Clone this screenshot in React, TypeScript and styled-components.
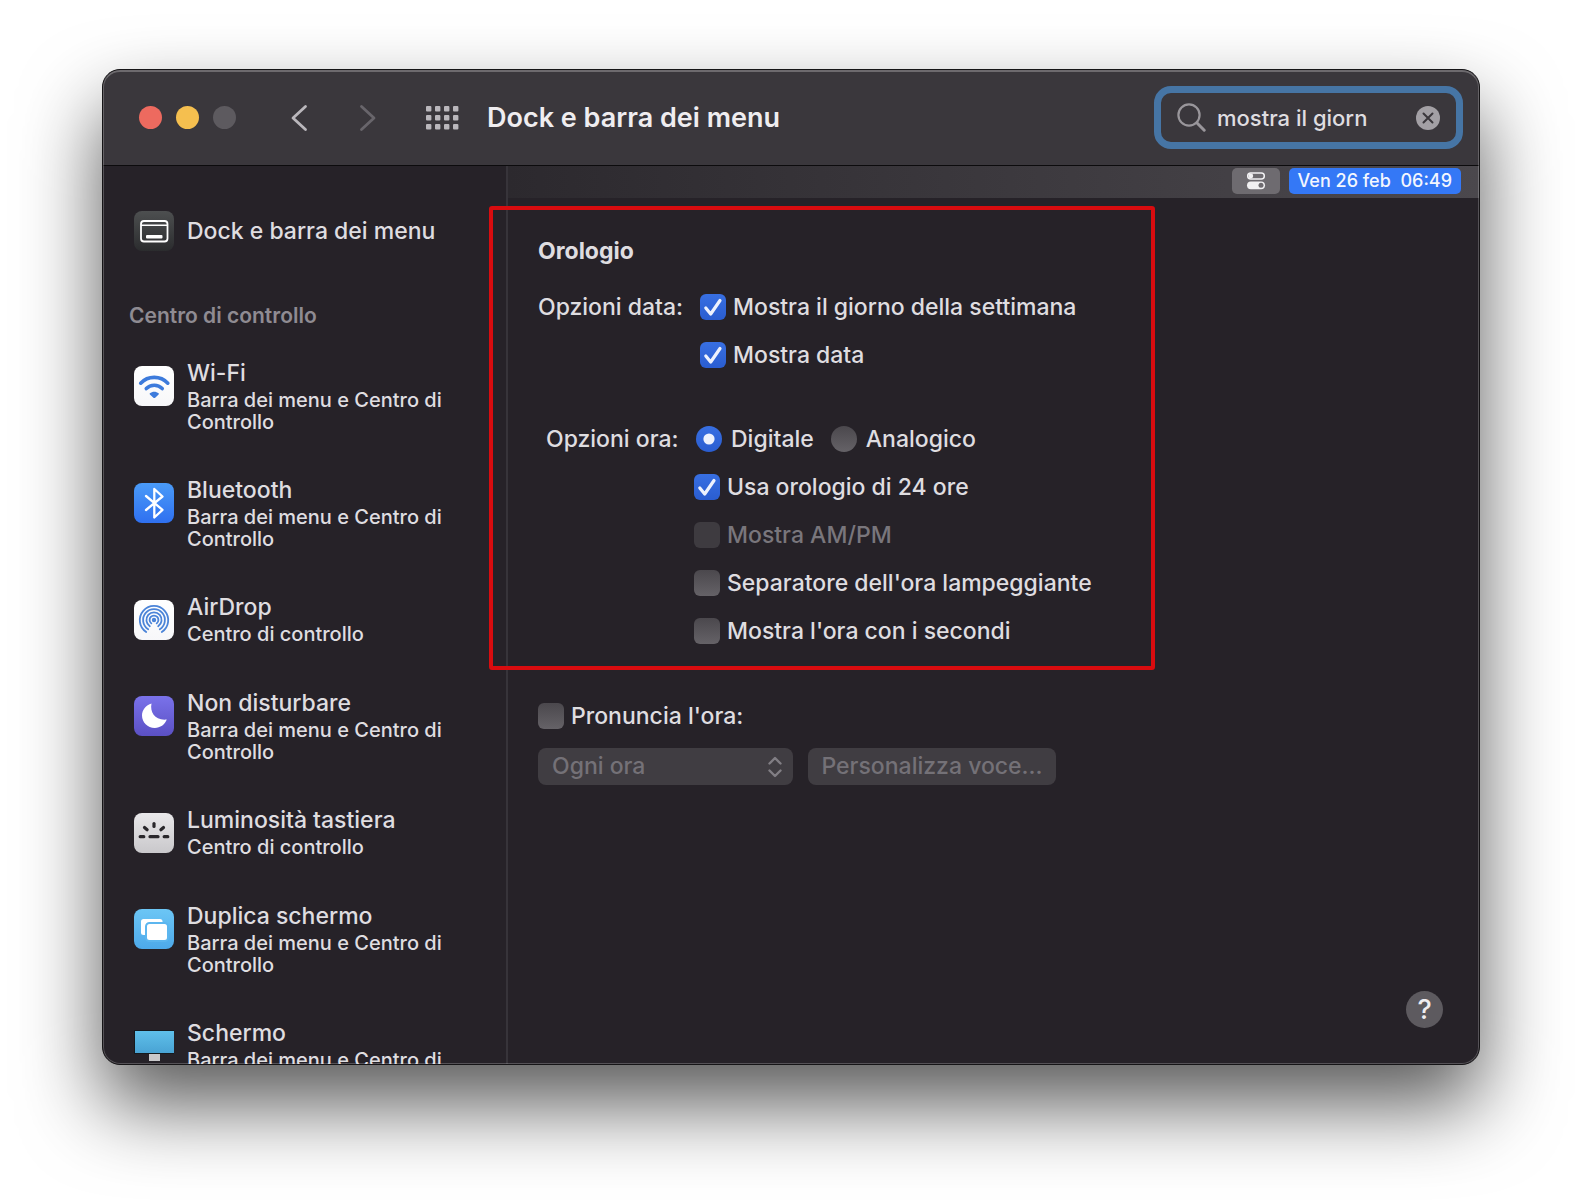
import React, { useId, useState } from "react";
import styled, { createGlobalStyle, css } from "styled-components";

const color = {
  text: "#dfdde0",
  strong: "#efedf0",
  muted: "#8f8b92",
  disabled: "#79767c",
  panel: "#262228",
  header: "#3a373c",
  line: "#37343a",
};

const GlobalStyle = createGlobalStyle`
  *, *::before, *::after { box-sizing: border-box; }
  body {
    margin: 0;
    background: #fff;
    color: ${color.text};
    font-family: Inter, "Liberation Sans", sans-serif;
    font-size: 23px;
    font-weight: 500;
    line-height: 28px;
  }
  button, input, select { font: inherit; color: inherit; }
`;

const Desktop = styled.div`
  padding: 69px 102px 135px;
  overflow: hidden;
`;

const Window = styled.main`
  position: relative;
  display: flex;
  flex-direction: column;
  height: calc(100vh - 204px);
  border: 1px solid #161517;
  border-radius: 18px;
  background: ${color.panel};
  box-shadow: 0 40px 80px rgba(0, 0, 0, 0.65);
  overflow: hidden;

  &::after {
    content: "";
    position: absolute;
    inset: 0;
    border: 1px solid rgba(255, 255, 255, 0.22);
    border-top: 2px solid rgba(255, 255, 255, 0.26);
    border-radius: 17px;
    pointer-events: none;
  }
`;

const Header = styled.header`
  flex: none;
  display: flex;
  align-items: center;
  height: 96px;
  padding: 0 16px 0 36px;
  border-bottom: 1px solid #0c0b0d;
  background: ${color.header};
`;

const Lights = styled.div`
  display: flex;
  gap: 14px;
`;

const Light = styled.button<{ $fill: string }>`
  width: 23px;
  height: 23px;
  padding: 0;
  border: 0;
  border-radius: 50%;
  background: ${(p) => p.$fill};
`;

const History = styled.div`
  display: flex;
  gap: 35px;
  margin: 0 40px 0 46px;
`;

const ToolButton = styled.button<{ $dim?: boolean }>`
  display: grid;
  place-items: center;
  width: 34px;
  height: 34px;
  padding: 0;
  border: 0;
  background: none;
  color: ${(p) => (p.$dim ? "#68656b" : "#bab7bc")};
`;

const Title = styled.h1`
  margin: 0 0 0 28px;
  color: ${color.strong};
  font-size: 27px;
  font-weight: 600;
  line-height: 32px;
`;

const SearchBox = styled.div`
  display: flex;
  align-items: center;
  gap: 11px;
  width: 309px;
  height: 63px;
  margin-left: auto;
  padding: 0 16px;
  border: 7px solid #4675a5;
  border-radius: 17px;
`;

const SearchInput = styled.input`
  flex: 1;
  min-width: 0;
  padding: 0;
  border: 0;
  outline: 0;
  background: none;
  color: ${color.text};
  font-size: 22px;
`;

const ClearButton = styled.button`
  display: grid;
  place-items: center;
  width: 24px;
  height: 24px;
  padding: 0;
  border: 0;
  border-radius: 50%;
  background: #a3a0a5;
`;

const Body = styled.div`
  flex: 1;
  display: flex;
  min-height: 0;
`;

const Sidebar = styled.nav`
  flex: none;
  width: 405px;
  padding: 45px 30px 0 31px;
  border-right: 2px solid ${color.line};
  overflow: hidden;
`;

const SideItem = styled.a<{ $center?: boolean }>`
  display: flex;
  align-items: ${(p) => (p.$center ? "center" : "flex-start")};
  gap: 13px;
  color: ${color.text};
  text-decoration: none;
  cursor: default;

  svg {
    flex: none;
    margin-top: ${(p) => (p.$center ? "0" : "8px")};
  }
`;

const SideHeading = styled.h2`
  margin: 51px -5px 28px;
  color: ${color.muted};
  font-size: 21px;
  font-weight: 600;
  line-height: 28px;
`;

const SideList = styled.ul`
  display: flex;
  flex-direction: column;
  gap: 42px;
  margin: 0;
  padding: 0;
  list-style: none;

  li {
    min-height: 54px;
  }
`;

const SideName = styled.span`
  display: block;
  line-height: 31px;
`;

const SideNote = styled.span`
  display: block;
  font-size: 20px;
  line-height: 22px;
`;

const Content = styled.section`
  flex: 1;
  display: flex;
  flex-direction: column;
  min-width: 0;
`;

const MenuBar = styled.div`
  flex: none;
  display: flex;
  align-items: center;
  justify-content: flex-end;
  gap: 9px;
  height: 32px;
  padding: 0 18px 2px 0;
  background: linear-gradient(90deg, #2c292e, #4b484d);
`;

const ControlCenter = styled.span`
  display: grid;
  place-items: center;
  width: 48px;
  height: 26px;
  border-radius: 5px;
  background: #6e6b70;
`;

const Clock = styled.time`
  padding: 0 9px;
  border-radius: 5px;
  background: #3478f6;
  color: #f3f6fe;
  font-size: 18px;
  line-height: 26px;
  white-space: pre;
`;

const Pane = styled.form`
  flex: 1;
  display: flex;
  flex-direction: column;
  align-items: flex-start;
  padding: 38px 36px 36px 30px;
`;

const ClockOptions = styled.section`
  position: relative;
  width: 600px;

  &::after {
    content: "";
    position: absolute;
    inset: -30px -17px -25px -49px;
    border: 4px solid #d80c0f;
    border-radius: 3px;
    pointer-events: none;
  }
`;

const PaneTitle = styled.h2`
  margin: 0 0 27px;
  color: ${color.text};
  font-size: 23px;
  font-weight: 700;
  line-height: 30px;
`;

const Group = styled.div<{ $inset?: boolean }>`
  display: flex;
  margin-bottom: 56px;
  padding-left: ${(p) => (p.$inset ? "8px" : "0")};

  &:last-child {
    margin-bottom: 0;
  }
`;

const GroupLabel = styled.span<{ $width: number }>`
  flex: none;
  width: ${(p) => p.$width}px;
`;

const Options = styled.div`
  display: flex;
  flex-direction: column;
  gap: 20px;
`;

const RadioRow = styled.div`
  display: flex;
  gap: 17px;
  padding-left: 2px;
`;

const Choice = styled.label<{ $disabled?: boolean; $gap?: number }>`
  display: flex;
  align-items: center;
  gap: ${(p) => p.$gap ?? 7}px;
  color: ${(p) => (p.$disabled ? color.disabled : color.text)};
`;

const Mark = styled.span`
  display: grid;

  > * {
    grid-area: 1 / 1;
  }

  svg {
    visibility: hidden;
    pointer-events: none;
  }

  input:checked + svg {
    visibility: visible;
  }
`;

const controlFace = css`
  appearance: none;
  width: 26px;
  height: 26px;
  margin: 0;
  background: linear-gradient(#4b484d, #656267);

  &:checked {
    background: linear-gradient(#386fe2, #2a5dd0);
  }

  &:disabled {
    background: #3e3b40;
  }
`;

const CheckInput = styled.input`
  ${controlFace}
  border-radius: 6px;
`;

const RadioInput = styled.input`
  ${controlFace}
  border-radius: 50%;
`;

const Speak = styled.section`
  margin-top: 57px;
`;

const SpeakRow = styled.div`
  display: flex;
  gap: 15px;
  margin-top: 18px;
`;

const SelectWrap = styled.span`
  display: grid;
  align-items: center;
  width: 255px;

  > * {
    grid-area: 1 / 1;
  }

  svg {
    justify-self: end;
    margin-right: 11px;
    pointer-events: none;
  }
`;

const mutedFace = css`
  height: 37px;
  border: 0;
  border-radius: 8px;
  background: #403d42;
  color: #747177;
  opacity: 1;
`;

const Select = styled.select`
  ${mutedFace}
  appearance: none;
  width: 100%;
  padding: 0 14px 2px;
`;

const PushButton = styled.button`
  ${mutedFace}
  width: 248px;
  padding: 0 0 2px;
  white-space: nowrap;
`;

const HelpButton = styled.button`
  width: 37px;
  height: 37px;
  margin-top: auto;
  align-self: flex-end;
  padding: 0;
  border: 0;
  border-radius: 50%;
  background: #5d5a5f;
  color: ${color.strong};
  font-size: 27px;
  line-height: 37px;
`;

const Tile = ({ from, to, children }: { from: string; to: string; children: React.ReactNode }) => {
  const id = useId();
  return (
    <svg width="40" height="40" viewBox="0 0 40 40" fill="none" aria-hidden="true">
      <defs>
        <linearGradient id={id} x1="0" y1="0" x2="0" y2="1">
          <stop stopColor={from} />
          <stop offset="1" stopColor={to} />
        </linearGradient>
      </defs>
      <rect width="40" height="40" rx="8" fill={`url(#${id})`} />
      {children}
    </svg>
  );
};

const DockIcon = () => (
  <Tile from="#4d4f50" to="#2b2c2e">
    <rect x="7" y="10" width="26.5" height="20.5" rx="3" stroke="#fff" strokeWidth="1.8" />
    <path d="M7 14.200h26.500" stroke="#fff" strokeWidth="1.5" />
    <rect x="12" y="24" width="16.5" height="3.6" rx="1" fill="#fff" />
  </Tile>
);

const WifiIcon = () => (
  <Tile from="#ffffff" to="#f7f7f9">
    <g stroke="#3d7bdc" strokeWidth="3.6" strokeLinecap="round">
      <path d="M6.700 17.200C14 9.400 26.500 9.400 33.800 17.200" />
      <path d="M12.300 22.600C16.600 18.200 23.900 18.200 28.200 22.600" />
    </g>
    <path d="M15.900 27.300c2.400-2.200 6.300-2.200 8.700 0q.6.600 0 1.100l-3.400 3.300q-.9.700-1.800 0L15.900 28.400q-.6-.5 0-1.100Z" fill="#3d7bdc" />
  </Tile>
);

const BluetoothIcon = () => (
  <Tile from="#4a9bf8" to="#2f70f0">
    <path d="M12 13l16.500 13.800L20.300 34.500V6l8.200 7.500L12 27" stroke="#fff" strokeWidth="2.3" strokeLinecap="round" strokeLinejoin="round" />
  </Tile>
);

const AirDropIcon = () => (
  <Tile from="#ffffff" to="#f7f7f9">
    <g stroke="#4b84d8" strokeWidth="1.8" strokeLinecap="round">
      <path d="M12.200 32A14.200 14.200 0 1 1 27.800 32" />
      <path d="M14.200 29.300A10.900 10.900 0 1 1 25.800 29.300" />
      <path d="M15.800 26.300A7.600 7.600 0 1 1 24.200 26.300" />
      <path d="M17.300 23.400A4.400 4.400 0 1 1 22.700 23.400" />
    </g>
    <circle cx="20" cy="20" r="2.2" fill="#4b84d8" />
  </Tile>
);

const MoonIcon = () => (
  <Tile from="#7a72ea" to="#5b50c4">
    <path d="M17.500 7.600C15.600 16.500 21.500 25 32.800 23.600C30.800 28.800 26.200 32 20.800 32C13.600 32 8 26.400 8 19.600C8 14 12 9.200 17.500 7.600Z" fill="#fff" />
  </Tile>
);

const KeyboardLightIcon = () => (
  <Tile from="#e9e8ea" to="#c9c8cb">
    <g stroke="#29272b" strokeWidth="3.2" strokeLinecap="round">
      <path d="M20 10.500v3" />
      <path d="M10.500 14.500l2.600 2.200" />
      <path d="M29.500 14.500l-2.600 2.200" />
      <path d="M6.200 23.700h3.600" />
      <path d="M16 23.700h8" />
      <path d="M30.200 23.700h3.600" />
    </g>
  </Tile>
);

const MirrorIcon = () => (
  <Tile from="#6cc6f5" to="#4da9ea">
    <rect x="7" y="10" width="21.5" height="16" rx="2.5" fill="#fff" />
    <rect x="12" y="14" width="22" height="18" rx="3.5" fill="#fff" stroke="#5cb6ef" strokeWidth="2" />
  </Tile>
);

const DisplayIcon = () => {
  const id = useId();
  return (
    <svg width="40" height="40" viewBox="0 0 40 40" aria-hidden="true">
      <defs>
        <linearGradient id={id} x1="0" y1="0" x2="0" y2="1">
          <stop stopColor="#5fc0ea" />
          <stop offset="1" stopColor="#49a3d4" />
        </linearGradient>
      </defs>
      <rect x="0" y="4" width="40" height="24" fill="#151a1e" />
      <rect x="1" y="5" width="39" height="22" fill={`url(#${id})`} />
      <rect x="15" y="28" width="11" height="7" fill="#c9c8ca" />
    </svg>
  );
};

const items = [
  { name: "Wi-Fi", note: "Barra dei menu e Centro di Controllo", Icon: WifiIcon },
  { name: "Bluetooth", note: "Barra dei menu e Centro di Controllo", Icon: BluetoothIcon },
  { name: "AirDrop", note: "Centro di controllo", Icon: AirDropIcon },
  { name: "Non disturbare", note: "Barra dei menu e Centro di Controllo", Icon: MoonIcon },
  { name: "Luminosità tastiera", note: "Centro di controllo", Icon: KeyboardLightIcon },
  { name: "Duplica schermo", note: "Barra dei menu e Centro di Controllo", Icon: MirrorIcon },
  { name: "Schermo", note: "Barra dei menu e Centro di Controllo", Icon: DisplayIcon },
];

type CheckProps = { label: string; checked?: boolean; disabled?: boolean };

const Check = ({ label, checked, disabled }: CheckProps) => (
  <Choice $disabled={disabled}>
    <Mark>
      <CheckInput type="checkbox" defaultChecked={checked} disabled={disabled} />
      <svg width="26" height="26" viewBox="0 0 26 26" fill="none" aria-hidden="true">
        <path d="M5.800 14l4.900 6L20 6.500" stroke="#eef2fd" strokeWidth="3.2" strokeLinecap="round" strokeLinejoin="round" />
      </svg>
    </Mark>
    {label}
  </Choice>
);

const Radio = ({ label, checked }: CheckProps) => (
  <Choice $gap={9}>
    <Mark>
      <RadioInput type="radio" name="clock-face" defaultChecked={checked} />
      <svg width="26" height="26" viewBox="0 0 26 26" aria-hidden="true">
        <circle cx="13" cy="13" r="5.6" fill="#eef2fd" />
      </svg>
    </Mark>
    {label}
  </Choice>
);

export default function App() {
  const [query, setQuery] = useState("mostra il giorn");

  return (
    <>
      <GlobalStyle />
      <Desktop>
        <Window>
          <Header>
            <Lights>
              <Light type="button" $fill="#ed6a5f" aria-label="Chiudi" />
              <Light type="button" $fill="#f5bf4f" aria-label="Riduci" />
              <Light type="button" $fill="#5d5a5f" aria-label="Ingrandisci" disabled />
            </Lights>
            <History>
              <ToolButton type="button" aria-label="Indietro">
                <svg width="18" height="28" viewBox="0 0 18 28" fill="none">
                  <path d="M15.500 2.500L3 14l12.500 11.500" stroke="currentColor" strokeWidth="2.8" strokeLinecap="round" strokeLinejoin="round" />
                </svg>
              </ToolButton>
              <ToolButton type="button" $dim aria-label="Avanti" disabled>
                <svg width="18" height="28" viewBox="0 0 18 28" fill="none">
                  <path d="M2.500 2.500L15 14L2.500 25.500" stroke="currentColor" strokeWidth="2.8" strokeLinecap="round" strokeLinejoin="round" />
                </svg>
              </ToolButton>
            </History>
            <ToolButton type="button" aria-label="Mostra tutte">
              <svg width="34" height="24" viewBox="0 0 34 24" fill="currentColor">
                {[0, 1, 2].map((row) =>
                  [0, 1, 2, 3].map((col) => (
                    <rect key={`${row}-${col}`} x={1 + col * 9} y={row * 9} width="5.4" height="5.4" rx="1" />
                  )),
                )}
              </svg>
            </ToolButton>
            <Title>Dock e barra dei menu</Title>
            <SearchBox role="search">
              <svg width="29" height="29" viewBox="0 0 29 29" fill="none" aria-hidden="true">
                <circle cx="12" cy="12" r="10.6" stroke="#99969b" strokeWidth="2.2" />
                <path d="M19.800 19.800l7.400 7.400" stroke="#99969b" strokeWidth="3" strokeLinecap="round" />
              </svg>
              <SearchInput aria-label="Cerca" value={query} onChange={(e) => setQuery(e.target.value)} />
              <ClearButton type="button" aria-label="Cancella" onClick={() => setQuery("")}>
                <svg width="12" height="12" viewBox="0 0 12 12">
                  <path d="M1.500 1.500l9 9m0-9l-9 9" stroke="#3a373c" strokeWidth="2" strokeLinecap="round" />
                </svg>
              </ClearButton>
            </SearchBox>
          </Header>

          <Body>
            <Sidebar>
              <SideItem href="#dock" $center>
                <DockIcon />
                <SideName>Dock e barra dei menu</SideName>
              </SideItem>
              <SideHeading>Centro di controllo</SideHeading>
              <SideList>
                {items.map(({ name, note, Icon }) => (
                  <li key={name}>
                    <SideItem href={`#${name}`}>
                      <Icon />
                      <span>
                        <SideName>{name}</SideName>
                        <SideNote>{note}</SideNote>
                      </span>
                    </SideItem>
                  </li>
                ))}
              </SideList>
            </Sidebar>

            <Content>
              <MenuBar>
                <ControlCenter>
                  <svg width="20" height="18" viewBox="0 0 20 18" fill="none" aria-hidden="true">
                    <rect x="1.7" y="1" width="16.6" height="6" rx="3" stroke="#f1f0f2" strokeWidth="1.5" />
                    <circle cx="4.8" cy="4" r="2.4" fill="#f1f0f2" />
                    <rect x="1" y="9.4" width="18" height="7.8" rx="3.9" fill="#f1f0f2" />
                    <circle cx="15" cy="13.3" r="2.5" fill="#6e6b70" />
                  </svg>
                </ControlCenter>
                <Clock>{"Ven 26 feb  06:49"}</Clock>
              </MenuBar>

              <Pane>
                <ClockOptions>
                  <PaneTitle>Orologio</PaneTitle>
                  <Group role="group" aria-label="Opzioni data">
                    <GroupLabel $width={162}>Opzioni data:</GroupLabel>
                    <Options>
                      <Check label="Mostra il giorno della settimana" checked />
                      <Check label="Mostra data" checked />
                    </Options>
                  </Group>
                  <Group $inset role="group" aria-label="Opzioni ora">
                    <GroupLabel $width={148}>Opzioni ora:</GroupLabel>
                    <Options>
                      <RadioRow>
                        <Radio label="Digitale" checked />
                        <Radio label="Analogico" />
                      </RadioRow>
                      <Check label="Usa orologio di 24 ore" checked />
                      <Check label="Mostra AM/PM" disabled />
                      <Check label="Separatore dell'ora lampeggiante" />
                      <Check label="Mostra l'ora con i secondi" />
                    </Options>
                  </Group>
                </ClockOptions>

                <Speak>
                  <Check label="Pronuncia l'ora:" />
                  <SpeakRow>
                    <SelectWrap>
                      <Select aria-label="Frequenza" disabled>
                        <option>Ogni ora</option>
                      </Select>
                      <svg width="14" height="22" viewBox="0 0 14 22" fill="none" aria-hidden="true">
                        <path d="M1.500 7.500L7 2l5.500 5.500M1.500 14.500L7 20l5.500-5.500" stroke="#817e84" strokeWidth="2.4" strokeLinecap="round" strokeLinejoin="round" />
                      </svg>
                    </SelectWrap>
                    <PushButton type="button" disabled>
                      Personalizza voce...
                    </PushButton>
                  </SpeakRow>
                </Speak>

                <HelpButton type="button" aria-label="Aiuto">
                  ?
                </HelpButton>
              </Pane>
            </Content>
          </Body>
        </Window>
      </Desktop>
    </>
  );
}
